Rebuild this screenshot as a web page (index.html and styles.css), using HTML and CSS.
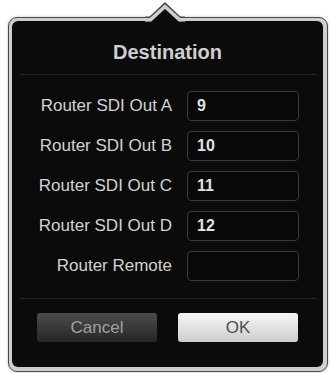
FILE: index.html
```html
<!DOCTYPE html>
<html>
<head>
<meta charset="utf-8">
<link rel="stylesheet" href="styles.css">
</head>
<body>
<div class="popover">
  <svg class="arrow" width="40" height="26" viewBox="0 0 40 26">
    <polygon points="0,21.5 5,21.5 20,7.5 35,21.5 40,21.5 40,26 0,26" fill="#0b0b0b"/>
    <polyline points="0,19 5.5,19 20,5.5 34.5,19 40,19" fill="none" stroke="#4a4a4a" stroke-width="5"/>
    <polyline points="0,19.75 5.5,19.75 20,6.5 34.5,19.75 40,19.75" fill="none" stroke="#cfcfcf" stroke-width="3.5"/>
  </svg>
  <div class="frame">
    <div class="panel">
      <div class="title">Destination</div>
      <div class="sep"></div>
      <div class="form">
        <div class="label">Router SDI Out A</div><div class="field">9</div>
        <div class="label">Router SDI Out B</div><div class="field">10</div>
        <div class="label">Router SDI Out C</div><div class="field">11</div>
        <div class="label">Router SDI Out D</div><div class="field">12</div>
        <div class="label">Router Remote</div><div class="field"></div>
      </div>
      <div class="sep sep2"></div>
      <div class="buttons">
        <div class="btn cancel">Cancel</div>
        <div class="btn ok">OK</div>
      </div>
    </div>
  </div>
</div>
</body>
</html>
```
FILE: styles.css
```css
html, body {
  margin: 0;
  padding: 0;
  background: #ffffff;
  font-family: "Liberation Sans", Arial, sans-serif;
}
.popover {
  position: relative;
  width: 331px;
  height: 373px;
  padding: 17px 0 0 8px;
  box-sizing: border-box;
}
.arrow {
  position: absolute;
  left: 145px;
  top: 0;
}
.frame {
  width: 320px;
  height: 355px;
  box-sizing: border-box;
  border: 1px solid #4a4a4a;
  border-radius: 9px;
  background: #cfcfcf;
  padding: 3px 4px 4px 3px;
  box-shadow: 0 0 3px rgba(0,0,0,0.25);
}
.panel {
  height: 100%;
  background: #0b0b0b;
  border-radius: 6px;
  box-sizing: border-box;
  padding-top: 10px;
  display: flex;
  flex-direction: column;
}
.title {
  height: 43px;
  line-height: 43px;
  text-align: center;
  font-weight: bold;
  font-size: 20px;
  color: #cfcfcf;
}
.sep {
  height: 1px;
  background: #262626;
  margin: 0 6px 0 8px;
}
.form {
  display: grid;
  grid-template-columns: 160px 112px;
  column-gap: 15px;
  row-gap: 10px;
  padding-top: 16px;
}
.label {
  height: 30px;
  line-height: 30px;
  text-align: right;
  font-size: 17px;
  color: #d2d2d2;
  white-space: nowrap;
}
.field {
  height: 30px;
  box-sizing: border-box;
  border: 1.5px solid #3a3a3a;
  border-radius: 4px;
  background: #080808;
  padding-left: 9px;
  line-height: 27px;
  font-size: 16px;
  font-weight: bold;
  color: #e2e2e2;
}
.sep2 {
  margin-top: 17px;
}
.buttons {
  display: flex;
  gap: 21px;
  padding: 14px 0 0 25px;
}
.btn {
  width: 120px;
  height: 29px;
  line-height: 30px;
  text-align: center;
  font-size: 17px;
  border-radius: 3px;
}
.cancel {
  background: linear-gradient(#4c4c4c, #262626);
  color: #a0a0a0;
}
.ok {
  background: linear-gradient(#f6f6f6, #cdcdcd);
  color: #4e4e4e;
}
```
